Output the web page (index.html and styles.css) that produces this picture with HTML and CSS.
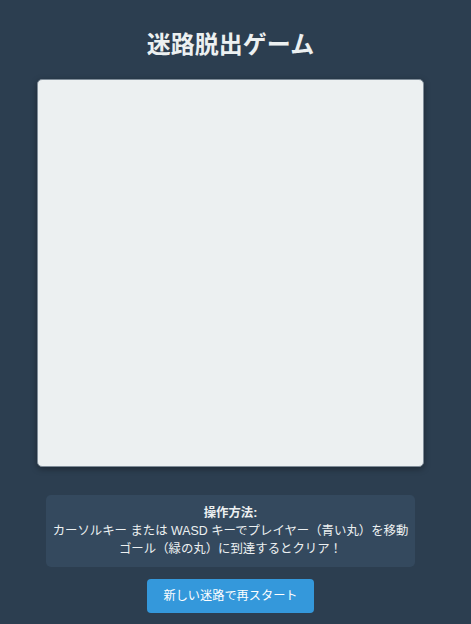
FILE: index.html
```html
<!DOCTYPE html>
<html lang="ja">
<head>
<meta charset="utf-8">
<title>迷路脱出ゲーム</title>
<link rel="stylesheet" href="styles.css">
</head>
<body>
<div class="page">
  <h1 class="title">迷路脱出ゲーム</h1>
  <canvas class="board" width="385" height="386"></canvas>
  <div class="help">
    <div class="help-head">操作方法:</div>
    <div>カーソルキー または WASD キーでプレイヤー（青い丸）を移動</div>
    <div>ゴール（緑の丸）に到達するとクリア！</div>
  </div>
  <button class="restart">新しい迷路で再スタート</button>
</div>
</body>
</html>
```
FILE: styles.css
```css
html, body {
  margin: 0;
  padding: 0;
  background: #2c3e50;
}
body {
  font-family: "Liberation Sans", "Noto Sans CJK JP", sans-serif;
  color: #ecf0f1;
}
.page {
  width: 461px;
  display: flex;
  flex-direction: column;
  align-items: center;
  padding-top: 28px;
}
.title {
  margin: 0 0 21px;
  font-family: "Noto Sans CJK JP", sans-serif;
  font-size: 24px;
  line-height: 30px;
  font-weight: 700;
  color: #ecf0f1;
}
.board {
  display: block;
  width: 385px;
  height: 386px;
  background: #ecf0f1;
  border: 1px solid #7f8c98;
  border-radius: 5px;
  box-shadow: 0 2px 6px rgba(0, 0, 0, 0.35);
}
.help {
  margin-top: 28px;
  background: #34495e;
  border-radius: 5px;
  padding: 9px 7px;
  font-size: 12.4px;
  line-height: 18px;
  text-align: center;
  color: #ecf0f1;
}
.help-head {
  font-weight: 700;
}
.restart {
  margin-top: 12px;
  background: #3498db;
  color: #ffffff;
  border: none;
  border-radius: 4px;
  font-family: "Liberation Sans", "Noto Sans CJK JP", sans-serif;
  font-size: 12.2px;
  line-height: 18px;
  padding: 8px 16px;
  width: 167px;
  height: 34px;
}
```
